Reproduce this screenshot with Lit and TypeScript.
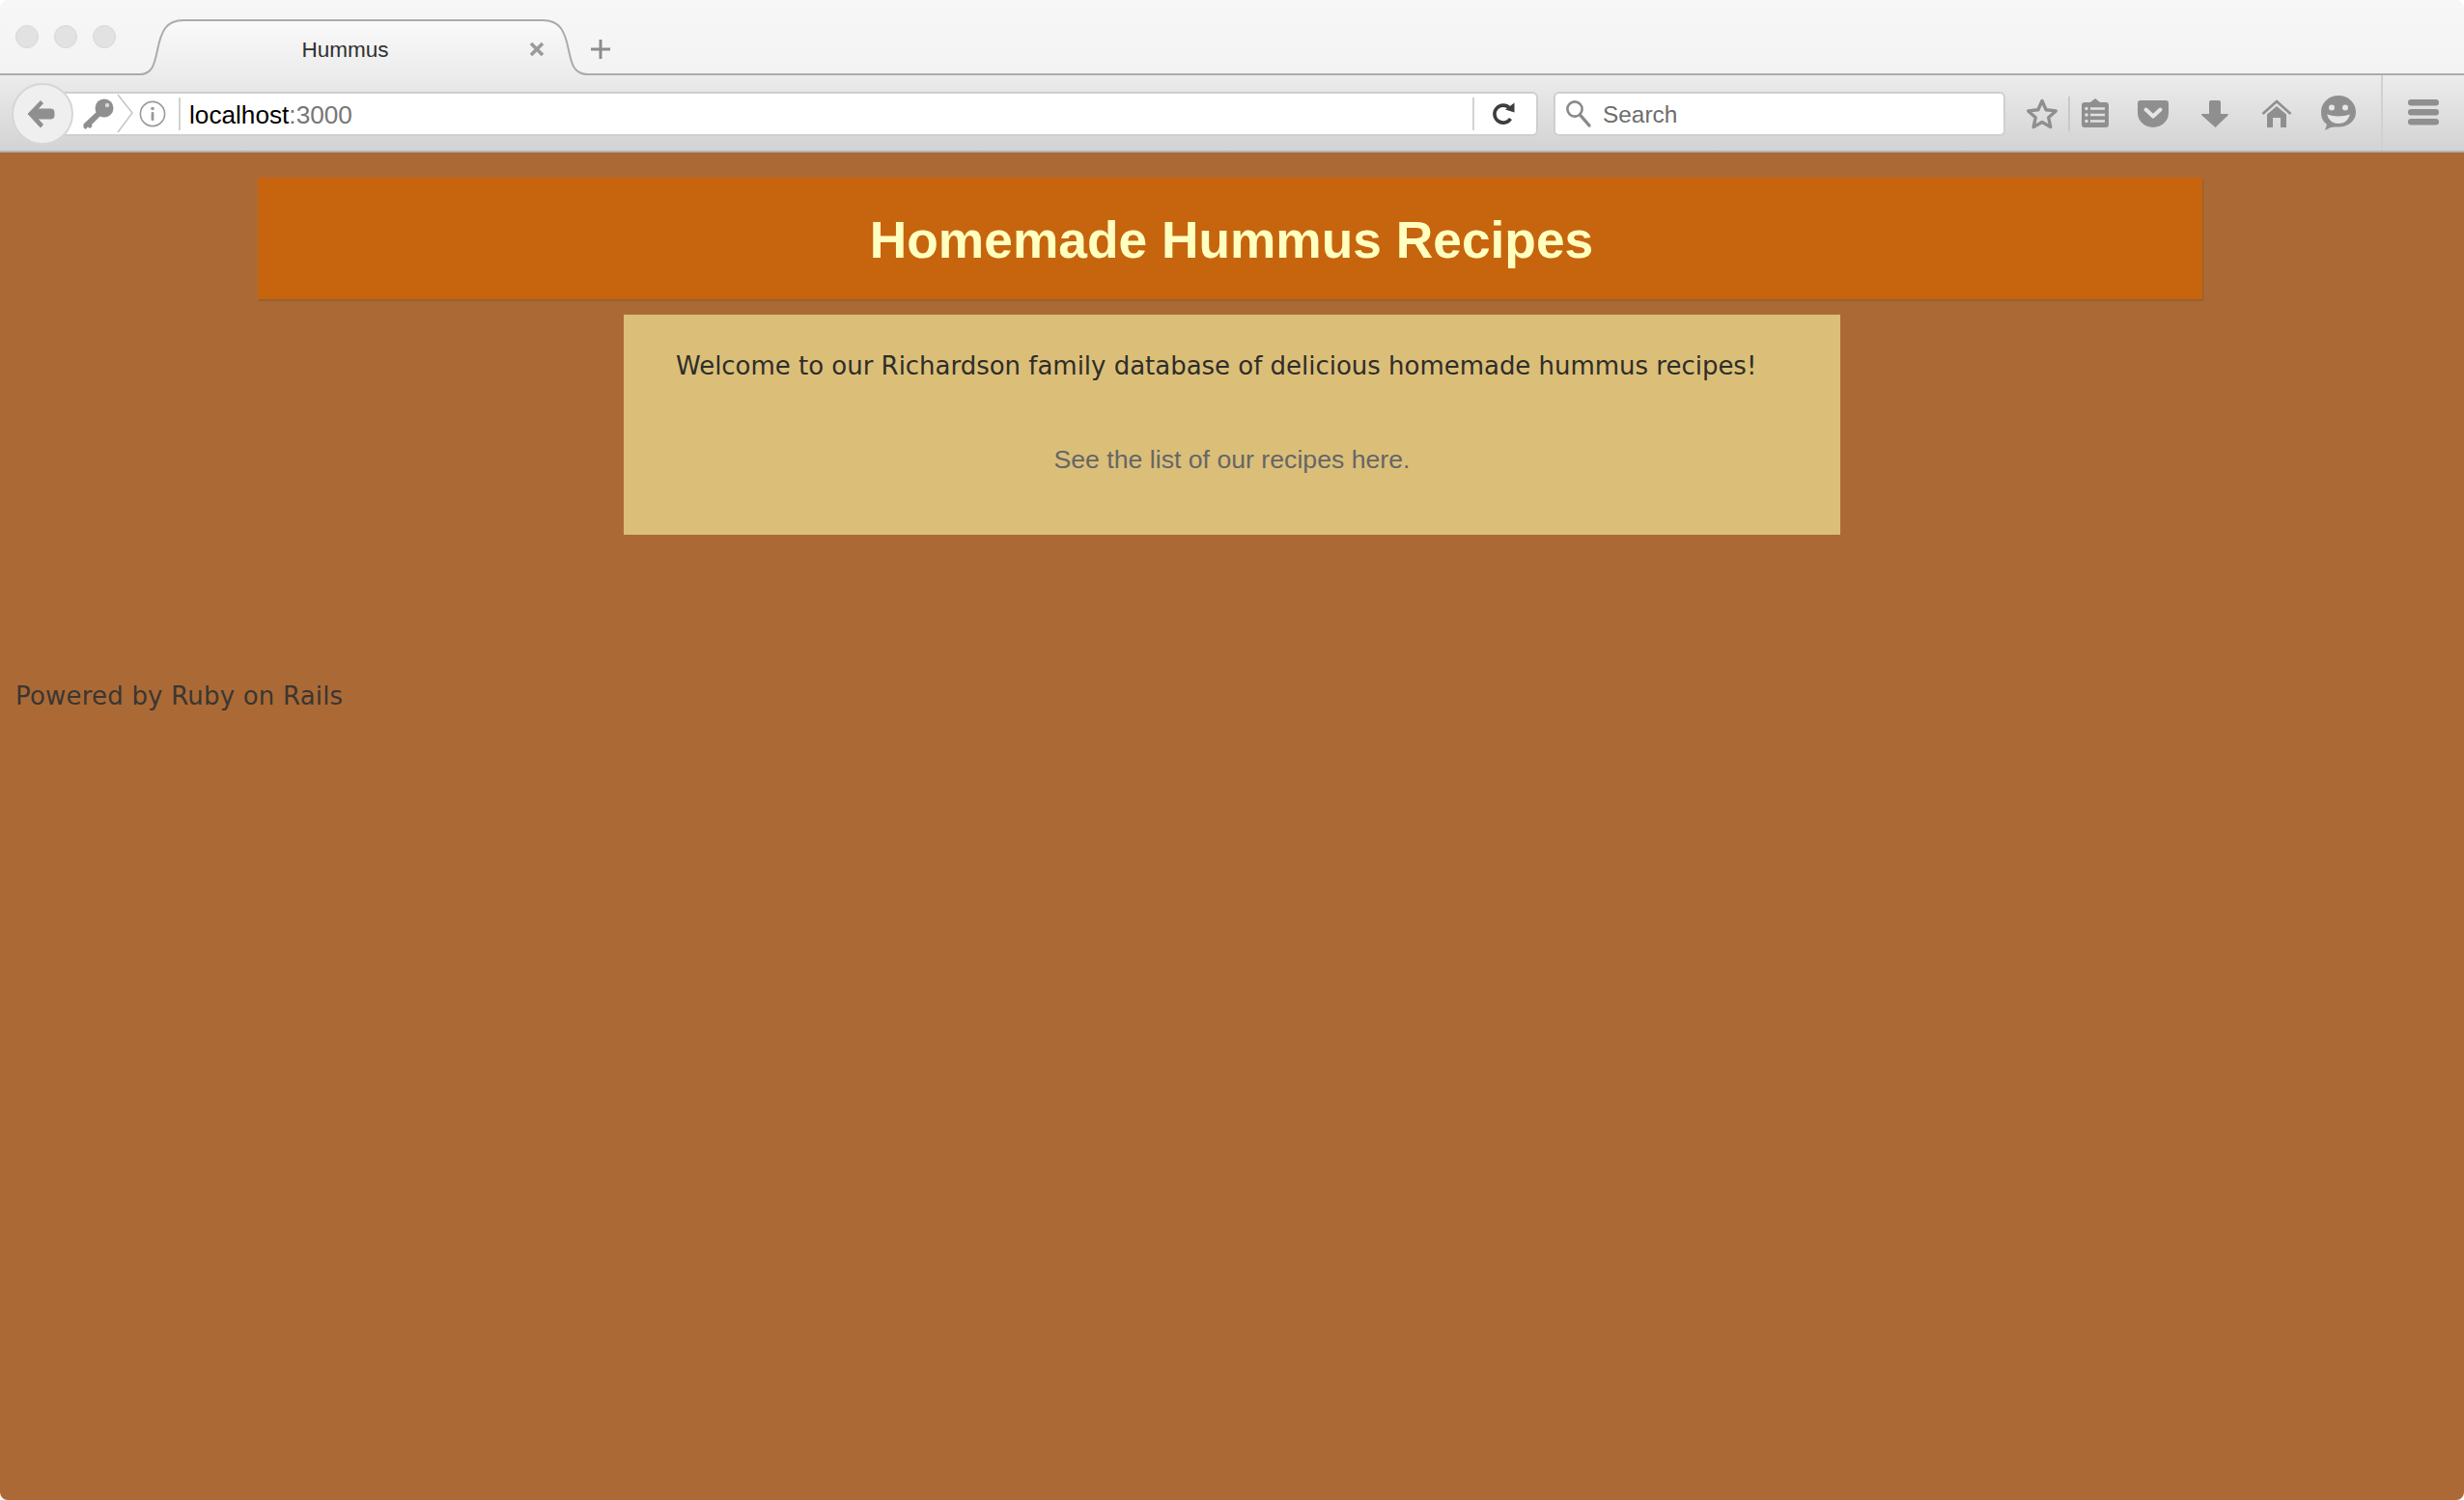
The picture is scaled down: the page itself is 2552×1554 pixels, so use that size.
import { LitElement, html, css, svg } from "lit";
import { customElement } from "lit/decorators.js";

@customElement("app-root")
export class AppRoot extends LitElement {
  static styles = css`
    :host { display: block; width: 100%; height: 100vh; background: #fff; font-family: "Liberation Sans", Arial, sans-serif; }
    .win { height: 100%; display: flex; flex-direction: column; overflow: hidden; border-radius: 8px; }

    .strip { flex: none; height: 76px; display: flex; align-items: flex-start; background: linear-gradient(#f7f7f7, #f3f3f3); border-bottom: 2px solid #ababab; }
    .lights { display: flex; gap: 16px; margin: 26px 0 0 16px; }
    .light { width: 24px; height: 24px; border-radius: 50%; box-sizing: border-box; background: #e2e2e2; border: 1px solid #d8d8d8; }
    .tab { position: relative; flex: none; width: 495px; height: 78px; margin-left: 10px; }
    .tab-shape { position: absolute; left: 0; top: 0; }
    .tab-title { position: absolute; left: 0; top: 39px; width: 455px; text-align: center; font-size: 22.5px; line-height: 26px; color: #303030; }
    .tab-close { position: absolute; left: 416px; top: 41px; }
    .newtab { flex: none; margin: 39px 0 0 -15px; width: 24px; height: 24px; }

    .bar { flex: none; height: 80px; box-sizing: border-box; display: flex; align-items: center; background: linear-gradient(#ececec, #d3d3d3); border-bottom: 2px solid #b3b3b3; }
    .back { position: relative; z-index: 1; flex: none; width: 64px; height: 64px; box-sizing: border-box; margin: 1px 0 0 12px; border-radius: 50%; background: #efefef; border: 2px solid #d6d6d6; display: flex; align-items: center; justify-content: center; }
    .back svg { margin-left: -4px; }
    .url { flex: none; width: 1537px; height: 46px; box-sizing: border-box; margin: 2px 0 0 -20px; padding-left: 30px; display: flex; align-items: center; background: #fff; border: 2px solid #cfcfcf; border-left: 0; border-radius: 0 6px 6px 0; }
    .ident { flex: none; display: block; }
    .vline { flex: none; width: 2px; height: 34px; background: #d2d2d2; }
    .addr { flex: 1; margin-left: 9px; padding-top: 2px; font-size: 26.2px; color: #000; white-space: nowrap; }
    .addr span { color: #777; }
    .reload { flex: none; width: 28px; height: 28px; margin: 0 20px 0 16px; }
    .search { flex: none; width: 468px; height: 46px; box-sizing: border-box; margin: 2px 0 0 16px; padding-left: 7px; display: flex; align-items: center; background: #fff; border: 2px solid #cfcfcf; border-radius: 6px; }
    .search svg { flex: none; }
    .search span { margin-left: 8px; padding-top: 2px; font-size: 24.4px; color: #6d6d6d; }
    .icons { flex: 1; align-self: stretch; display: flex; align-items: center; margin-left: 18px; }
    .ic { flex: none; width: 40px; height: 40px; margin-top: 2px; }
    .sep { flex: none; width: 2px; height: 36px; margin: 2px 6px 0 7px; background: #c9c9c9; }
    .m20 { margin-left: 20px; }
    .m24 { margin-left: 24px; }
    .sep2 { flex: none; width: 2px; align-self: stretch; margin: 0 22px 0 24px; background: #d0d0d0; }

    .page { flex: 1; min-height: 0; box-sizing: border-box; padding-top: 26px; background: #ab6a35; }
    header { width: 2014px; height: 126px; margin-left: 267px; padding-left: 2px; box-sizing: border-box; display: flex; align-items: center; justify-content: center; background: #c6650e; border-top: 2px solid #cc6210; border-left: 1px solid #cc6210; box-shadow: 1px 2px 1px #98602f; }
    h1 { margin: 0; padding-top: 2px; font-size: 53.3px; line-height: 60px; font-weight: 700; color: #ffffc0; }
    .box { width: 1260px; height: 228px; margin: 16px auto 0; box-sizing: border-box; padding-top: 35px; background: #dbbf79; }
    .welcome { margin: 0; padding-left: 54px; font-family: "DejaVu Sans", Verdana, sans-serif; font-size: 26px; letter-spacing: -0.02px; line-height: 36px; color: #2f2d28; white-space: nowrap; }
    .link { margin: 61px 0 0; text-align: center; font-size: 26.67px; line-height: 36px; color: #666; }
    .foot { margin: 149px 0 0 16px; font-family: "DejaVu Sans", Verdana, sans-serif; font-size: 26px; letter-spacing: 0.2px; line-height: 36px; color: #3a3632; }
  `;

  private ic(body: unknown) {
    return html`<svg class="ic" viewBox="0 0 40 40" fill="#8f8f8f">${body}</svg>`;
  }

  render() {
    return html`<div class="win">
      <div class="strip">
        <div class="lights"><div class="light"></div><div class="light"></div><div class="light"></div></div>
        <div class="tab">
          <svg class="tab-shape" width="495" height="78" viewBox="0 0 495 78">
            <defs><linearGradient id="tg" x1="0" y1="0" x2="0" y2="1"><stop offset="0" stop-color="#fafafa"/><stop offset="1" stop-color="#ececec"/></linearGradient></defs>
            <path d="M15 78 C28 78 30 66 33 52 C37 32 42 21 60 21 H432 C450 21 455 32 459 52 C462 66 464 78 479 78 Z" fill="url(#tg)"/>
            <path d="M0 77 H15 C28 77 30 66 33 52 C37 32 42 21 60 21 H432 C450 21 455 32 459 52 C462 66 464 77 479 77 H495" fill="none" stroke="#ababab" stroke-width="2"/>
          </svg>
          <div class="tab-title">Hummus</div>
          <svg class="tab-close" width="20" height="20" viewBox="0 0 20 20"><path d="M4 4 L16 16 M16 4 L4 16" stroke="#9a9a9a" stroke-width="3.6"/></svg>
        </div>
        <svg class="newtab" viewBox="0 0 24 24"><path d="M12 2 V22 M2 12 H22" stroke="#8c8c8c" stroke-width="3"/></svg>
      </div>
      <div class="bar">
        <div class="back">
          <svg width="32" height="32" viewBox="0 0 32 32"><path d="M16 2.5 L18.5 5 L13 11 H27 A3 3 0 0 1 30 14 V18 A3 3 0 0 1 27 21 H13 L18.5 27 L16 30 L3 16 Z" fill="#8f8f8f" stroke="#8f8f8f" stroke-width="1" stroke-linejoin="round"/></svg>
        </div>
        <div class="url">
          <svg class="ident" width="58" height="44" viewBox="0 0 58 44">
            <circle cx="22" cy="16" r="9.5" fill="#8f8f8f"/>
            <circle cx="25" cy="13" r="2.2" fill="#d8d8d8"/>
            <path d="M15 19 L19 23 L9 33 L9.5 35 L7 37 L5 35.5 L2.5 38 L0.5 36 L0.5 32.5 Z" fill="#8f8f8f"/>
            <path d="M36 2 L51 21 L36 41" fill="none" stroke="#c8c8c8" stroke-width="1.6"/>
          </svg>
          <svg class="ident" width="28" height="28" viewBox="0 0 28 28">
            <circle cx="14" cy="14" r="12.6" fill="none" stroke="#9a9a9a" stroke-width="1.6"/>
            <circle cx="14" cy="8.5" r="1.8" fill="#9a9a9a"/>
            <rect x="12.6" y="12" width="2.8" height="9" rx="1" fill="#9a9a9a"/>
          </svg>
          <div class="vline" style="margin-left:13px"></div>
          <div class="addr">localhost<span>:3000</span></div>
          <div class="vline"></div>
          <svg class="reload" viewBox="0 0 28 28">
            <path d="M20.5 8 A9 9 0 1 0 21.5 19" fill="none" stroke="#3d3d3d" stroke-width="3.6"/>
            <path d="M16 9.5 L25.5 2.5 V12.5 Z" fill="#3d3d3d"/>
          </svg>
        </div>
        <div class="search">
          <svg width="34" height="34" viewBox="0 0 34 34">
            <circle cx="13" cy="12" r="7.6" fill="none" stroke="#8a8a8a" stroke-width="2.6"/>
            <path d="M18.5 18 L28 29" stroke="#8a8a8a" stroke-width="3.4" stroke-linecap="round"/>
          </svg>
          <span>Search</span>
        </div>
        <div class="icons">
          ${this.ic(svg`<path d="M20 6.5 L24.1 15.8 L34.3 16.9 L26.7 23.7 L28.8 33.6 L20 28.5 L11.2 33.6 L13.3 23.7 L5.7 16.9 L15.9 15.8 Z" fill="none" stroke="#8f8f8f" stroke-width="3.4" stroke-linejoin="round"/>`)}
          <div class="sep"></div>
          ${this.ic(svg`<path d="M9 8 H15 L20 4 L25 8 H31 A3 3 0 0 1 34 11 V31 A3 3 0 0 1 31 34 H9 A3 3 0 0 1 6 31 V11 A3 3 0 0 1 9 8 Z"/>
            <path d="M15 14.5 H30 M15 21 H30 M15 27.5 H30" stroke="#e2e2e2" stroke-width="2.4"/>
            <circle cx="11" cy="14.5" r="1.7" fill="#e2e2e2"/><circle cx="11" cy="21" r="1.7" fill="#e2e2e2"/><circle cx="11" cy="27.5" r="1.7" fill="#e2e2e2"/>`)}
          <span class="m20"></span>
          ${this.ic(svg`<path d="M7 6 H33 A3 3 0 0 1 36 9 V19 A16 15 0 0 1 4 19 V9 A3 3 0 0 1 7 6 Z"/>
            <path d="M12.5 15.5 L20 22.5 L27.5 15.5" fill="none" stroke="#e6e6e6" stroke-width="4" stroke-linecap="round" stroke-linejoin="round"/>`)}
          <span class="m24"></span>
          ${this.ic(svg`<path d="M16 6 H24 A2 2 0 0 1 26 8 V20 H33 A1 1 0 0 1 33.6 21.6 L20.5 34 L6.4 21.6 A1 1 0 0 1 7 20 H14 V8 A2 2 0 0 1 16 6 Z"/>`)}
          <span class="m24"></span>
          ${this.ic(svg`<path d="M5.5 20 L20 7 L34.5 20" fill="none" stroke="#8f8f8f" stroke-width="2.6"/>
            <path d="M20 12 L30 20.5 V34 H24 V24 H16 V34 H10 V20.5 Z"/>`)}
          <span class="m24"></span>
          ${this.ic(svg`<path d="M20 1 C30 1 38 8.5 38 18 C38 27.5 30 33.5 20 33.5 C17 33.5 15 33.5 12 34 L6 37 L8 31 C4 28 2 24 2 18 C2 8.5 10 1 20 1 Z"/>
            <circle cx="13" cy="13.5" r="3" fill="#e6e6e6"/><circle cx="27" cy="13.5" r="3" fill="#e6e6e6"/>
            <path d="M8 20.5 Q20 24.5 32 20.5 Q29 30 20 30 Q11 30 8 20.5 Z" fill="#e6e6e6"/>`)}
          <div class="sep2"></div>
          ${this.ic(svg`<rect x="4" y="5" width="32" height="6.4" rx="3.2"/><rect x="4" y="15" width="32" height="6.4" rx="3.2"/><rect x="4" y="25" width="32" height="6.4" rx="3.2"/>`)}
        </div>
      </div>
      <main class="page">
        <header><h1>Homemade Hummus Recipes</h1></header>
        <section class="box">
          <p class="welcome">Welcome to our Richardson family database of delicious homemade hummus recipes!</p>
          <p class="link">See the list of our recipes here.</p>
        </section>
        <p class="foot">Powered by Ruby on Rails</p>
      </main>
    </div>`;
  }
}
